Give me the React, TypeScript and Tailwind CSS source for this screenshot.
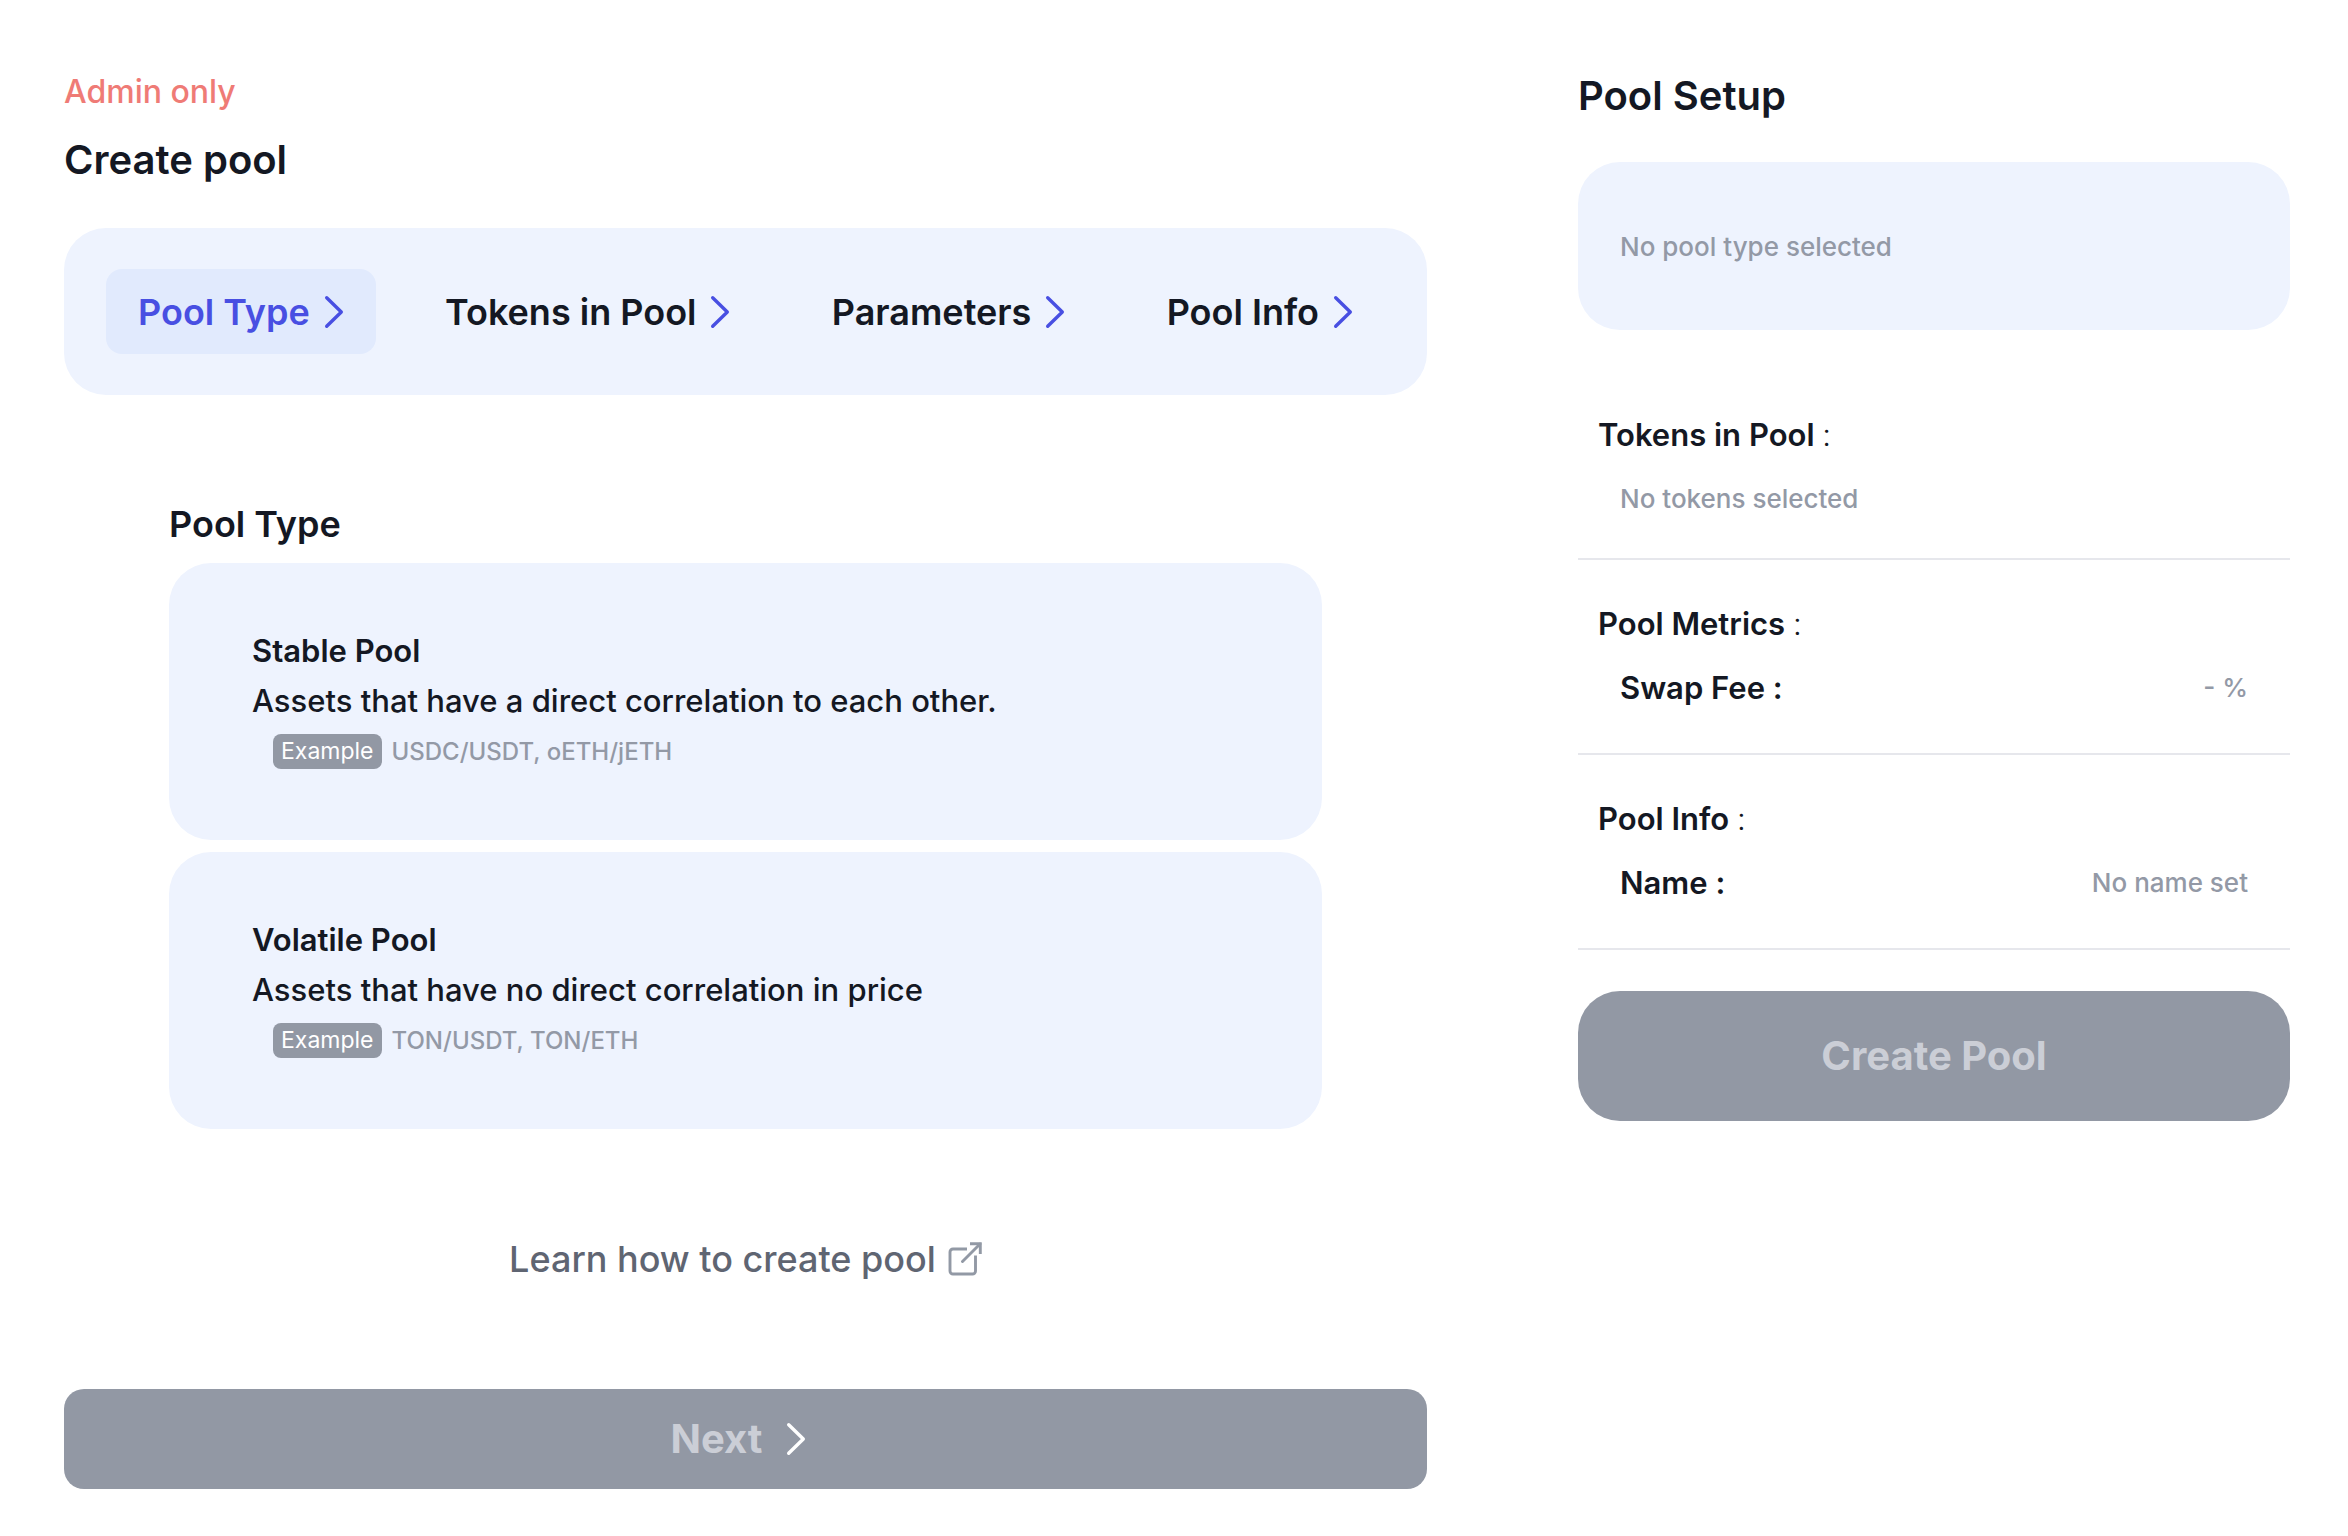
import type { ReactNode } from "react";

const steps = ["Pool Type", "Tokens in Pool", "Parameters", "Pool Info"];

const poolTypes = [
  {
    name: "Stable Pool",
    description: "Assets that have a direct correlation to each other.",
    example: "USDC/USDT, oETH/jETH",
  },
  {
    name: "Volatile Pool",
    description: "Assets that have no direct correlation in price",
    example: "TON/USDT, TON/ETH",
  },
];

function Chevron({ className }: { className: string }) {
  return (
    <svg viewBox="0 0 20 34" fill="none" stroke="currentColor" strokeWidth="3.4" strokeLinecap="round" strokeLinejoin="round" aria-hidden="true" className={`h-[34px] w-5 shrink-0 ${className}`}>
      <path d="M2.700 2.700 17.300 17 2.700 31.300" />
    </svg>
  );
}

function ExternalLink() {
  return (
    <svg viewBox="0 0 34 34" fill="none" stroke="currentColor" strokeWidth="2.900" strokeLinecap="butt" strokeLinejoin="round" aria-hidden="true" className="size-[34px] shrink-0 text-[#9299a5]">
      <path d="M19 7H5a3 3 0 0 0-3 3v19a3 3 0 0 0 3 3h19.500a3 3 0 0 0 3-3V13.500" />
      <path d="M14.500 19.500 32 2" strokeLinecap="round" />
      <path d="M22 1.700h10.300v10.300" strokeLinejoin="miter" />
    </svg>
  );
}

function SummarySection({ title, children, className }: { title: string; children: ReactNode; className: string }) {
  return (
    <section className={`border-b-2 border-[#e6e7ec] pt-[42px] ${className}`}>
      <h3 className="px-5 text-[31px] leading-[44px] font-semibold">
        {title} <span className="font-light">:</span>
      </h3>
      <div className="mt-5 flex items-center justify-between px-[42px] leading-[44px]">{children}</div>
    </section>
  );
}

export default function App() {
  return (
    <main className="grid grid-cols-[1363fr_712fr] items-start gap-[151px] bg-white pr-[58px] pl-16 font-['Inter',sans-serif] text-[#141823]">
      <div className="pt-[68px]">
        <p className="text-[32px] leading-[48px] font-medium text-[#ef7b76]">Admin only</p>
        <h1 className="mt-4 text-[40px] leading-[56px] font-semibold">Create pool</h1>

        <nav aria-label="Pool creation steps" className="mt-10 flex justify-between rounded-[42px] bg-[#eef3fe] px-[42px] py-[41px]">
          {steps.map((step, index) => (
            <button
              key={step}
              type="button"
              aria-current={index === 0 ? "step" : undefined}
              className={
                index === 0
                  ? "flex h-[85px] items-center gap-[14px] rounded-[16px] bg-[#e1eafd] px-8 text-[36px] font-semibold text-[#484fe2]"
                  : "flex h-[85px] items-center gap-[14px] rounded-[16px] px-8 text-[36px] font-semibold"
              }
            >
              {step}
              <Chevron className="text-[#484fe2]" />
            </button>
          ))}
        </nav>

        <section className="mt-[103px] px-[105px]">
          <h2 className="text-[36px] leading-[52px] font-semibold">Pool Type</h2>
          <div className="mt-[13px] flex flex-col gap-3">
            {poolTypes.map((pool) => (
              <button key={pool.name} type="button" className="flex h-[277px] flex-col justify-center rounded-[42px] bg-[#eef3fe] px-[83px] text-left">
                <span className="text-[31px] leading-[50px] font-semibold">{pool.name}</span>
                <span className="text-[31px] leading-[50px] font-medium">{pool.description}</span>
                <span className="flex h-[52px] items-center gap-[10px] pl-[21px]">
                  <span className="rounded-lg bg-[#9298a4] px-2 text-[23px] leading-[35px] text-white">Example</span>
                  <span className="text-[24px] font-medium text-[#9399a6]">{pool.example}</span>
                </span>
              </button>
            ))}
          </div>
        </section>

        <a href="#learn" className="mx-auto mt-[104px] flex w-fit items-center gap-3 text-[36px] leading-[52px] font-medium text-[#5f6572]">
          Learn how to create pool
          <ExternalLink />
        </a>

        <button type="button" disabled className="mt-[104px] flex h-[100px] w-full items-center justify-center gap-6 rounded-[20px] bg-[#9298a4] pr-[14px] text-[40px] font-bold text-[#cbced6]">
          Next
          <Chevron className="text-white" />
        </button>
      </div>

      <aside className="pt-[68px]">
        <h2 className="text-[40px] leading-[56px] font-semibold">Pool Setup</h2>
        <div className="mt-[38px] flex h-[168px] items-center rounded-[42px] bg-[#eef3fe] px-[42px] text-[26px] font-medium text-[#9399a6]">
          No pool type selected
        </div>

        <div className="mt-[41px]">
          <SummarySection title="Tokens in Pool" className="pb-[37px]">
            <span className="text-[26px] font-medium text-[#9399a6]">No tokens selected</span>
          </SummarySection>
          <SummarySection title="Pool Metrics" className="pb-[43px]">
            <span className="text-[31px] font-semibold">Swap Fee :</span>
            <span className="text-[26px] font-medium text-[#9399a6]">- %</span>
          </SummarySection>
          <SummarySection title="Pool Info" className="pb-[43px]">
            <span className="text-[31px] font-semibold">Name :</span>
            <span className="text-[26px] font-medium text-[#9399a6]">No name set</span>
          </SummarySection>
        </div>

        <button type="button" disabled className="mt-[41px] h-[130px] w-full rounded-[42px] bg-[#9298a4] text-[40px] font-bold text-[#cbced6]">
          Create Pool
        </button>
      </aside>
    </main>
  );
}
